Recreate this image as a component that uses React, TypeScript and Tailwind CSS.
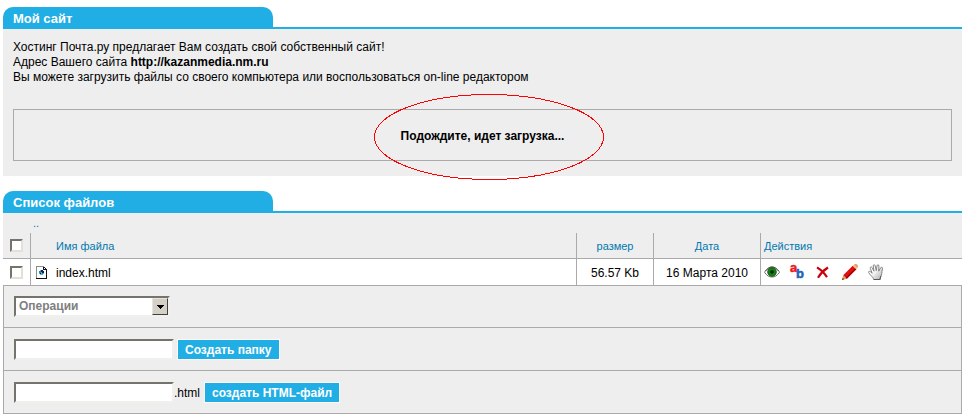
import type { ReactNode } from "react";

const sunken =
  "border-2 border-t-[#75736b] border-l-[#75736b] border-r-[#f2f0ec] border-b-[#f2f0ec] bg-white";

function Panel({ title, children }: { title: string; children: ReactNode }) {
  return (
    <section>
      <header className="border-b-2 border-[#20aee5]">
        <h2 className="h-5 w-[270px] rounded-t-[10px] bg-[#20aee5] px-2.5 text-[13px] leading-[24px] font-bold text-white">
          {title}
        </h2>
      </header>
      {children}
    </section>
  );
}

function Tick({ label }: { label: string }) {
  return (
    <input
      type="checkbox"
      aria-label={label}
      className="block size-[13px] appearance-none border-2 border-t-[#75736b] border-r-[#e4e0d8] border-b-[#e4e0d8] border-l-[#75736b] bg-white"
    />
  );
}

function PageIcon() {
  return (
    <svg width="12" height="13" viewBox="0 0 12 13" shapeRendering="crispEdges" aria-hidden="true">
      <path d="M0 0h8l3 3v9H0z" fill="#fff" />
      <path d="M0 0h8v1H1v11H0z" fill="#8c8c8c" />
      <path d="M8 1h1v1h1v1h1v10H0v-1h10V4H7V1z" fill="#111" />
      <path d="M8 2h1v1H8z" fill="#fff" />
      <path d="M4 4h3v1h1v3H7v1H4V8H3V5h1z" fill="#58b8d4" />
      <path d="M5 4h2v1h1v2H6V6H5zM4 7h1v1H4z" fill="#0b1a78" />
      <path d="M3 5h2v2H3zM6 7h1v1H6z" fill="#2c8d70" />
    </svg>
  );
}

function EyeIcon() {
  return (
    <svg width="16" height="16" viewBox="0 0 16 16" aria-hidden="true">
      <path d="M.5 8.2C3 4.500 5.200 3 8 3s5.300 1.500 7.600 5.200C13 11.800 11 13 8 13S3 11.800.5 8.200z" fill="#fff" stroke="#6c7268" />
      <path d="M1.500 7C4 4 6 3 8 3S12.500 4.200 14.500 7" fill="none" stroke="#4c5548" />
      <circle cx="8" cy="8" r="4.300" fill="#118511" stroke="#0b470b" strokeWidth=".8" />
      <circle cx="8" cy="8" r="1.800" fill="#001c00" />
    </svg>
  );
}

function RenameIcon() {
  return (
    <svg width="14" height="20" viewBox="0 0 14 20" aria-hidden="true" className="overflow-visible font-bold">
      <text x="0" y="10" fontSize="13" fill="#f01820" stroke="#f01820" strokeWidth=".5">
        a
      </text>
      <text x="6" y="16" fontSize="13" fill="#1d63b7" stroke="#1d63b7" strokeWidth=".5">
        b
      </text>
    </svg>
  );
}

function DeleteIcon() {
  return (
    <svg width="14" height="13" viewBox="0 0 14 13" aria-hidden="true">
      <path d="M1 1.500C4 3 8.500 7.500 11 11.200M12 1.500C8 4 4.500 7.500 2 11.700" fill="none" stroke="#cc0008" strokeWidth="2.200" />
    </svg>
  );
}

function PencilIcon() {
  return (
    <svg width="16" height="16" viewBox="0 0 16 16" aria-hidden="true">
      <path d="M0 16 1.200 11.200 4.800 14.700z" fill="#d9a653" />
      <path d="M0 16 .7 13.800 2.200 15.200z" fill="#4b2920" />
      <path d="M1.200 11.200 10.700 1.700l3.600 3.600L4.800 14.700z" fill="#e01010" />
      <path d="M3.800 13.700 13.300 4.300l1 1L4.800 14.700z" fill="#a50000" />
      <path d="M10.700 1.700 12 .7l3.300 3.300-1 1.300z" fill="#efc565" />
      <path d="M12 .7 13 0h1.500L16 1.500V3l-.7 1z" fill="#e99a72" />
    </svg>
  );
}

function HandIcon() {
  return (
    <svg width="16" height="16" viewBox="0 0 16 16" aria-hidden="true">
      <defs>
        <linearGradient id="palm" x1="0" y1="0" x2="1" y2="1">
          <stop offset=".4" stopColor="#fff" />
          <stop offset="1" stopColor="#aaa" />
        </linearGradient>
      </defs>
      <path
        d="M5.500 15.500c0-2-1.500-2.500-2.600-4L.7 8.700C0 7.600 1.300 6.800 2.200 7.500l2 1.700L2.300 4.400c-.5-1.500 1.200-2 1.800-.8L6 7.200 5.200 2c-.1-1.600 1.700-1.700 2-.3L8.300 6.700 9 1.700c.2-1.400 2-1.200 1.900.3L10.700 7.200l1.900-3.400c.8-1.200 2.300-.5 1.900.9-.6 2-.5 3.200-.7 4.900-.2 2-1.500 3-1.500 5.900z"
        fill="url(#palm)"
        stroke="#777"
        strokeWidth=".9"
      />
      <path d="M12.800 12 11.800 15.500H6" fill="none" stroke="#555" />
    </svg>
  );
}

const actions = [
  { name: "Просмотр", icon: <EyeIcon /> },
  { name: "Переименовать", icon: <RenameIcon /> },
  { name: "Удалить", icon: <DeleteIcon /> },
  { name: "Редактировать", icon: <PencilIcon /> },
  { name: "Доступ", icon: <HandIcon /> },
];

const actionButton =
  "h-[21px] border border-white bg-[#20aee5] px-[7px] text-[12px] leading-[21px] font-bold text-white";

export default function App() {
  return (
    <main className="flex flex-col gap-[15px] bg-white pt-[7px] pr-1.5 pl-[3px] font-['Liberation_Sans',Arial,sans-serif] text-[12px] leading-[15px] text-black">
      <Panel title="Мой сайт">
        <div className="bg-[#eee] px-2.5 pt-[11px] pb-[15px]">
          <p>Хостинг Почта.ру предлагает Вам создать свой собственный сайт!</p>
          <p>
            Адрес Вашего сайта <b>http://kazanmedia.nm.ru</b>
          </p>
          <p>Вы можете загрузить файлы со своего компьютера или воспользоваться on-line редактором</p>
          <div className="relative mt-6 flex h-[52px] items-center justify-center border border-[#aaa] pt-0.5" role="status">
            <b>Подождите, идет загрузка...</b>
            <svg
              className="pointer-events-none absolute top-1/2 left-1/2 mt-0.5 ml-1.5 -translate-x-1/2 -translate-y-1/2"
              width="230"
              height="86"
              viewBox="0 0 230 86"
              aria-hidden="true"
            >
              <ellipse cx="115" cy="43" rx="114.500" ry="42.500" fill="none" stroke="#f00" shapeRendering="crispEdges" />
            </svg>
          </div>
        </div>
      </Panel>

      <Panel title="Список файлов">
        <table className="w-full table-fixed border-separate border-spacing-0">
          <colgroup>
            <col className="w-[27px]" />
            <col />
            <col className="w-[77px]" />
            <col className="w-[107px]" />
            <col className="w-[202px]" />
          </colgroup>
          <thead className="bg-[#eee] text-left text-[11px] text-[#0078ae]">
            <tr className="h-5">
              <td className="p-0" />
              <td colSpan={4} className="p-0 pl-[3px]">
                <a href="#up" className="block leading-5">..</a>
              </td>
            </tr>
            <tr className="h-[26px] *:border-b *:border-[#aaa] *:p-0 *:font-normal">
              <th className="pl-[7px]!"><Tick label="Выбрать все" /></th>
              <th className="border-l pt-0.5! pl-[25px]!">Имя файла</th>
              <th className="border-l pt-0.5! text-center">размер</th>
              <th className="border-l pt-0.5! text-center">Дата</th>
              <th className="border-l pt-0.5! pl-[3px]!">Действия</th>
            </tr>
          </thead>
          <tbody>
            <tr className="h-[26px] *:border-[#aaa] *:p-0">
              <td className="pl-[7px]!"><Tick label="Выбрать index.html" /></td>
              <td className="border-l">
                <div className="flex items-center gap-2 pl-[5px]">
                  <PageIcon />
                  <a href="#index" className="pt-0.5">index.html</a>
                </div>
              </td>
              <td className="border-l pt-0.5! text-center">56.57 Kb</td>
              <td className="border-l pt-0.5! text-center">16 Марта 2010</td>
              <td className="border-l">
                <div className="flex gap-1.5 pl-[3px]">
                  {actions.map((a) => (
                    <button key={a.name} type="button" aria-label={a.name} className="flex size-5 items-center justify-start">
                      {a.icon}
                    </button>
                  ))}
                </div>
              </td>
            </tr>
          </tbody>
        </table>

        <div className="divide-y divide-[#aaa] border border-[#aaa] bg-[#eee]">
          <div className="px-2.5 py-2.5">
            <div className="relative w-[156px]">
              <select
                aria-label="Операции"
                className={`block h-[21px] w-full appearance-none pl-[3px] text-[12px] leading-[17px] font-bold text-[#808080] ${sunken}`}
              >
                <option>Операции</option>
              </select>
              <span className="pointer-events-none absolute top-0.5 right-0.5 flex h-[17px] w-4 items-center justify-center border border-t-[#e8e4dc] border-r-[#404040] border-b-[#404040] border-l-[#e8e4dc] bg-[#d4d0c8]">
                <svg width="7" height="4" viewBox="0 0 7 4" shapeRendering="crispEdges" aria-hidden="true">
                  <path d="M0 0h7v1H6v1H5v1H4v1H3V3H2V2H1V1H0z" />
                </svg>
              </span>
            </div>
          </div>
          <form className="flex items-center gap-[3px] px-2.5 pt-[11px] pb-2.5">
            <input type="text" aria-label="Имя папки" className={`h-[21px] w-40 px-1 ${sunken}`} />
            <button type="button" className={actionButton}>Создать папку</button>
          </form>
          <form className="flex items-center px-2.5 pt-[11px] pb-2.5">
            <input id="html-name" type="text" aria-label="Имя файла" className={`h-[21px] w-40 px-1 ${sunken}`} />
            <label htmlFor="html-name" className="pt-0.5 pr-1">.html</label>
            <button type="button" className={actionButton}>создать HTML-файл</button>
          </form>
        </div>
      </Panel>
    </main>
  );
}
